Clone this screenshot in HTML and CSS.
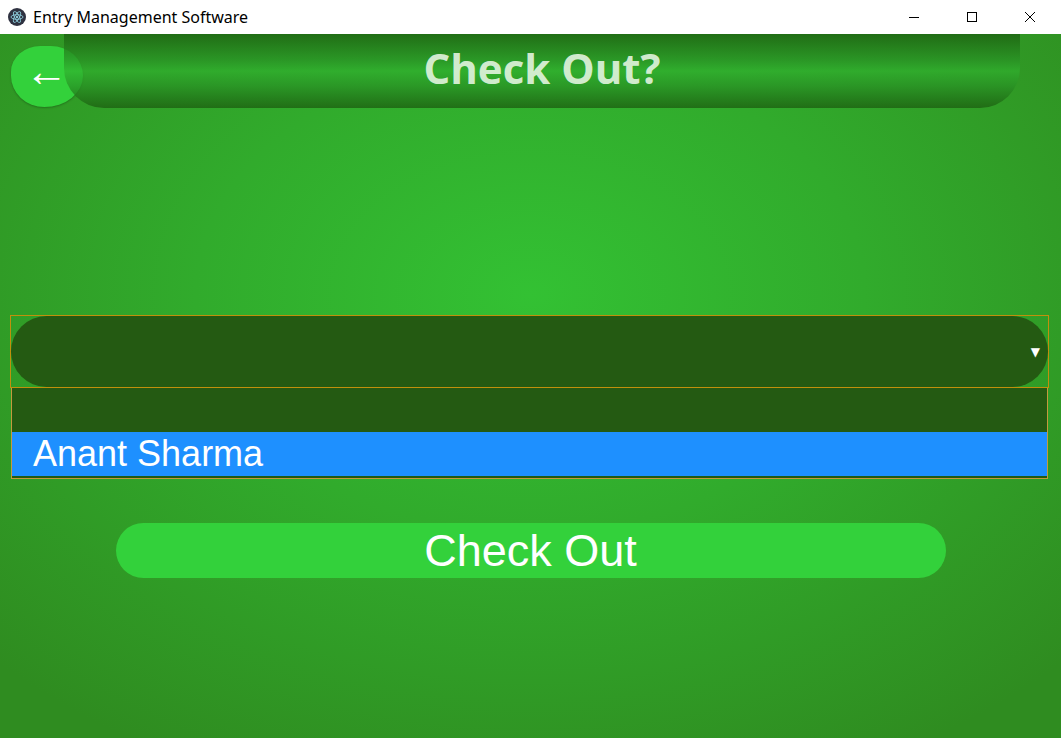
FILE: index.html
```html
<!DOCTYPE html>
<html>
<head>
<meta charset="utf-8">
<title>Entry Management Software</title>
<link rel="stylesheet" href="styles.css">
</head>
<body>
<div class="titlebar">
  <div class="app-title">
    <svg class="app-icon" width="18" height="18" viewBox="0 0 18 18">
      <circle cx="9" cy="9" r="9" fill="#2f3241"/>
      <g fill="none" stroke="#9feaf9" stroke-width="0.9" opacity="0.85">
        <ellipse cx="9" cy="9" rx="6" ry="2.3"/>
        <ellipse cx="9" cy="9" rx="6" ry="2.3" transform="rotate(60 9 9)"/>
        <ellipse cx="9" cy="9" rx="6" ry="2.3" transform="rotate(120 9 9)"/>
      </g>
      <circle cx="9" cy="9" r="1.1" fill="#9feaf9"/>
    </svg>
    <span>Entry Management Software</span>
  </div>
  <div class="win-controls">
    <div class="wc"><svg width="12" height="12" viewBox="0 0 12 12"><path d="M1 6.5h10" stroke="#000" stroke-width="1"/></svg></div>
    <div class="wc"><svg width="12" height="12" viewBox="0 0 12 12"><rect x="1.5" y="1.5" width="9" height="9" fill="none" stroke="#000" stroke-width="1"/></svg></div>
    <div class="wc"><svg width="12" height="12" viewBox="0 0 12 12"><path d="M1 1L11 11M11 1L1 11" stroke="#000" stroke-width="1"/></svg></div>
  </div>
</div>
<main class="window">
  <button class="back">&larr;</button>
  <header class="heading"><h1>Check Out?</h1></header>
  <section class="form">
    <div class="select-wrap">
      <div class="select"><span class="caret">&#9660;</span></div>
      <ul class="listbox">
        <li class="opt"></li>
        <li class="opt active">Anant Sharma</li>
      </ul>
    </div>
    <button class="submit">Check Out</button>
  </section>
</main>
</body>
</html>
```
FILE: styles.css
```css
* { box-sizing: border-box; }
html, body { margin: 0; padding: 0; }
body {
  width: 1061px;
  height: 738px;
  overflow: hidden;
  font-family: "Liberation Sans", Arial, sans-serif;
  background: #fff;
}
.titlebar {
  height: 34px;
  background: #fff;
  display: flex;
  align-items: center;
  justify-content: space-between;
}
.app-title {
  display: flex;
  align-items: center;
  gap: 7px;
  padding-left: 8px;
  font-family: "Noto Sans", "Open Sans", sans-serif;
  font-size: 16px;
  color: #000;
}
.app-icon { display: block; }
.win-controls { display: flex; height: 100%; padding-right: 2px; }
.wc {
  width: 58px;
  height: 100%;
  display: flex;
  align-items: center;
  justify-content: center;
}
.wc svg { display: block; }
.window {
  position: relative;
  height: 704px;
  background: radial-gradient(ellipse 70% 75% at 50% 37%, #33c133 0%, #31ab2c 45%, #2f8c20 100%);
}
.back {
  position: absolute;
  left: 11px;
  top: 12px;
  width: 72px;
  height: 61px;
  border: none;
  background: #33d13b;
  color: #fff;
  font-family: "Liberation Sans", Arial, sans-serif;
  font-size: 43px;
  line-height: 1;
  border-radius: 44% 48% 58% 50% / 45% 52% 55% 55%;
  box-shadow: 0 1px 2px rgba(0,0,0,0.25);
  display: flex;
  align-items: center;
  justify-content: flex-start;
  padding: 0 0 10px 14px;
}
.heading {
  position: relative;
  margin: 0 41px 0 64px;
  height: 74px;
  border-radius: 0 0 40px 40px;
  background: linear-gradient(to bottom, rgba(30,100,18,0.85) 0%, rgba(40,145,36,0.72) 35%, rgba(48,176,46,0.68) 50%, rgba(40,145,36,0.72) 70%, rgba(30,100,18,0.85) 100%);
  display: flex;
  align-items: center;
  justify-content: center;
}
.heading h1 {
  margin: 0 0 8px 0;
  font-family: "Open Sans", "Noto Sans", sans-serif;
  font-weight: 700;
  font-size: 42px;
  letter-spacing: 0;
  color: rgba(232, 246, 228, 0.9);
}
.form {
  padding-top: 207px;
  display: flex;
  flex-direction: column;
  align-items: center;
}
.select-wrap {
  align-self: stretch;
  margin: 0 12px 0 10px;
}
.select {
  height: 73px;
  border: 1px solid #c0900c;
  background: transparent;
  display: flex;
  align-items: center;
  justify-content: flex-end;
  position: relative;
}
.select::before {
  content: "";
  position: absolute;
  inset: 0;
  background: #245a12;
  border-radius: 36px;
}
.caret {
  position: relative;
  color: #fff;
  font-family: "DejaVu Sans", sans-serif;
  font-size: 12px;
  margin-right: 8px;
  margin-top: 0;
}
.listbox {
  list-style: none;
  margin: -1px 1px 0 1px;
  padding: 0 0 2px 0;
  background: #245a12;
  border: 1px solid #c49a3c;
  font-size: 36px;
  color: #fff;
}
.opt {
  height: 44px;
  line-height: 44px;
  padding-left: 21px;
}
.opt.active { background: #1e90ff; }
.submit {
  margin-top: 44px;
  width: 830px;
  height: 55px;
  border: none;
  border-radius: 28px;
  background: #33d13b;
  color: #fff;
  font-family: "Liberation Sans", Arial, sans-serif;
  font-size: 45px;
  line-height: 55px;
  padding: 0;
}
```
